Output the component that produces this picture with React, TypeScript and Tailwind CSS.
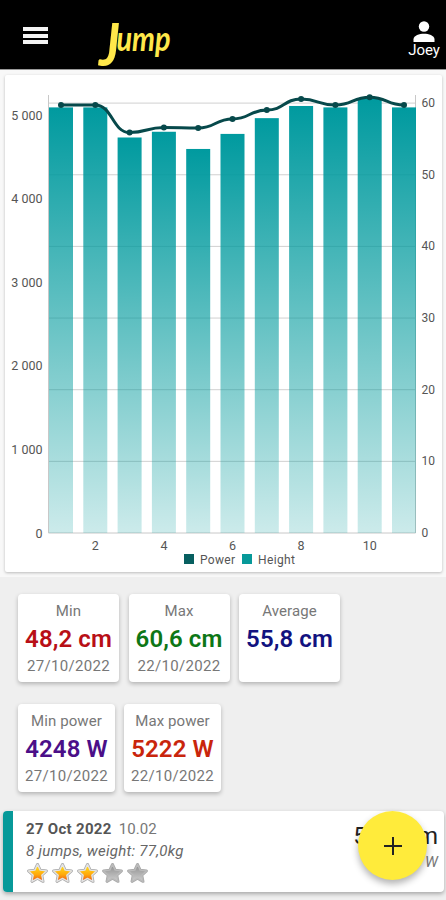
import { clsx } from "clsx";

interface Stat {
  label: string;
  value: string;
  date?: string;
  color: string;
  width: string;
}

const heightStats: Stat[] = [
  { label: "Min", value: "48,2 cm", date: "27/10/2022", color: "text-[#b80f16]", width: "w-[101px]" },
  { label: "Max", value: "60,6 cm", date: "22/10/2022", color: "text-[#0d7716]", width: "w-[101px]" },
  { label: "Average", value: "55,8 cm", color: "text-[#12127f]", width: "w-[101px]" },
];

const powerStats: Stat[] = [
  { label: "Min power", value: "4248 W", date: "27/10/2022", color: "text-[#4b0f88]", width: "w-[97px]" },
  { label: "Max power", value: "5222 W", date: "22/10/2022", color: "text-[#c9250c]", width: "w-[97px]" },
];

// height in cm, shown as bars against the right axis
const heights = [59.4, 59.4, 55.2, 56, 53.6, 55.7, 57.9, 59.6, 59.4, 60.6, 59.4];
// power in W, shown as the curve against the left axis
const powers = [5122, 5122, 4793, 4853, 4847, 4955, 5062, 5194, 5122, 5216, 5122];

const LEFT = 44;
const RIGHT = 410.5;
const BASE = 458;
const STEP = 34.3;

const barX = (i: number) => LEFT + i * STEP;
const heightY = (v: number) => BASE - v * 7.165;
const powerY = (v: number) => BASE - v * 0.08355;

// horizontal bezier: the curve is level at every point
function curvePath() {
  return powers
    .map((p, i) => {
      const x = barX(i) + 12;
      const y = powerY(p);
      if (i === 0) return `M${x} ${y}`;
      const mid = x - STEP / 2;
      return `C${mid} ${powerY(powers[i - 1])} ${mid} ${y} ${x} ${y}`;
    })
    .join(" ");
}

function JumpChart() {
  return (
    <svg width="437" height="497" viewBox="0 0 437 497" className="block text-[12.5px]" fill="#555">
      <defs>
        <linearGradient id="bar" x1="0" y1="0" x2="0" y2="1">
          <stop offset="0" stopColor="#009a9f" />
          <stop offset="1" stopColor="#009a9a" stopOpacity="0.2" />
        </linearGradient>
      </defs>

      {[10, 20, 30, 40, 50, 60].map((v) => (
        <line key={v} x1={LEFT} x2={RIGHT} y1={heightY(v)} y2={heightY(v)} stroke="#d0d0d0" />
      ))}
      <path d={`M${LEFT - 0.5} 20V${BASE}H${RIGHT}V20`} fill="none" stroke="#c8c8c8" />

      {heights.map((h, i) => (
        <rect key={i} x={barX(i)} y={heightY(h)} width="24" height={BASE - heightY(h)} fill="url(#bar)" />
      ))}

      <path d={curvePath()} fill="none" stroke="#07494b" strokeWidth="3" />
      {powers.map((p, i) => (
        <circle key={i} cx={barX(i) + 12} cy={powerY(p)} r="3" fill="#07494b" />
      ))}

      {["0", "1 000", "2 000", "3 000", "4 000", "5 000"].map((t, i) => (
        <text key={t} x="37.5" y={powerY(i * 1000) + 4.5} textAnchor="end">
          {t}
        </text>
      ))}
      {[0, 10, 20, 30, 40, 50, 60].map((v) => (
        <text key={v} x="416.5" y={heightY(v) + 4} fontSize="12">
          {v}
        </text>
      ))}
      {[2, 4, 6, 8, 10].map((v) => (
        <text key={v} x={barX(v - 1) + 12} y="475" textAnchor="middle">
          {v}
        </text>
      ))}

      <rect x="179" y="479" width="10" height="10" fill="#075f60" />
      <text x="195" y="488.5" fontSize="12" textLength="35">Power</text>
      <rect x="237" y="479" width="10" height="10" fill="#079999" />
      <text x="253" y="488.5" fontSize="12" textLength="37">Height</text>
    </svg>
  );
}

function StatCard({ stat }: { stat: Stat }) {
  return (
    <div
      className={clsx(
        "flex h-[88px] flex-col items-center rounded-[4px] bg-white pt-[7px] shadow-[0_2px_4px_rgba(0,0,0,0.25)]",
        stat.width
      )}
    >
      <span className="text-[15px] leading-[20px] tracking-[0.1px] text-[#777]">{stat.label}</span>
      <span
        className={clsx(
          "pt-px text-[24px] font-semibold leading-[34px] tracking-[0.1px] whitespace-nowrap",
          stat.color
        )}
      >
        {stat.value}
      </span>
      {stat.date && (
        <span className="text-[15px] leading-[20px] tracking-[0.3px] text-[#777]">{stat.date}</span>
      )}
    </div>
  );
}

function Star({ filled }: { filled: boolean }) {
  const shape = "M12 2.5l2.8 6 6.6.8-4.9 4.5 1.3 6.5-5.8-3.2-5.8 3.2 1.3-6.5-4.9-4.5 6.6-.8z";
  return (
    <svg width="25" height="22" viewBox="0 0 24 23">
      <defs>
        <linearGradient id="gold" x1="0" y1="0" x2="0" y2="1">
          <stop offset="0.2" stopColor="#ffd21c" />
          <stop offset="0.6" stopColor="#ffa90c" />
          <stop offset="1" stopColor="#e9531b" />
        </linearGradient>
        <linearGradient id="silver" x1="0" y1="0" x2="0" y2="1">
          <stop offset="0" stopColor="#8c8c8c" />
          <stop offset="1" stopColor="#cfcfcf" />
        </linearGradient>
      </defs>
      <path d={shape} fill="#bbb" stroke="#a8a8a8" strokeWidth="3" strokeLinejoin="round" />
      <path
        d={shape}
        fill={filled ? "url(#gold)" : "url(#silver)"}
        stroke={filled ? "#e4e4e4" : "#bbb"}
        strokeWidth="1.4"
        strokeLinejoin="round"
      />
    </svg>
  );
}

function Header() {
  return (
    <header className="flex h-[70px] shrink-0 border-b border-[#999] bg-black pl-[23px]">
      <button aria-label="Menu" className="mt-[27px] flex h-[17px] w-[25px] flex-col justify-between">
        {[0, 1, 2].map((n) => (
          <span key={n} className="h-[4px] w-full bg-[#f4f4f4]" />
        ))}
      </button>
      <svg width="100" height="69" className="ml-[40px] overflow-visible" fill="#ffe84a">
        <text
          transform="translate(11 51) scale(0.85 1)"
          fontFamily="'Lato', sans-serif"
          fontStyle="italic"
          fontWeight="700"
        >
          <tspan fontSize="60" dy="15">
            J
          </tspan>
          <tspan fontSize="34" dy="-15" dx="-4">
            ump
          </tspan>
        </text>
      </svg>
      <div className="ml-auto flex w-[44px] flex-col items-center pt-[21px] text-white">
        <svg width="22" height="21" viewBox="0 0 22 21" fill="currentColor">
          <circle cx="11" cy="5.5" r="5.2" />
          <path d="M0.5 21v-2.5c0-4 6-5.7 10.5-5.7s10.5 1.7 10.5 5.7V21z" />
        </svg>
        <span className="text-[15px] leading-[16px] tracking-[-0.1px]">Joey</span>
      </div>
    </header>
  );
}

export default function App() {
  return (
    <div className="flex h-[900px] w-[446px] flex-col overflow-hidden bg-[#efefef] font-['Roboto',sans-serif]">
      <Header />

      <section className="h-[507px] shrink-0 bg-[#f8f8f8] pt-[5px] pl-[5px]">
        <div className="h-[497px] w-[437px] rounded-[2px] bg-white shadow-[0_1px_3px_rgba(0,0,0,0.25)]">
          <JumpChart />
        </div>
      </section>

      <section className="flex shrink-0 flex-col gap-[22px] pt-[17px] pl-[18px]">
        <div className="flex gap-[9.5px]">
          {heightStats.map((s) => (
            <StatCard key={s.label} stat={s} />
          ))}
        </div>
        <div className="flex gap-[9px]">
          {powerStats.map((s) => (
            <StatCard key={s.label} stat={s} />
          ))}
        </div>
      </section>

      <article className="relative mt-[19px] ml-[3px] flex h-[81px] w-[441px] shrink-0 rounded-[4px] bg-white shadow-[0_2px_4px_rgba(0,0,0,0.3)]">
        <div className="w-[10px] rounded-l-[4px] bg-[#079999]" />
        <div className="flex-1 pt-[8px] pl-[13px] text-[#666]">
          <p className="text-[15px] leading-[21px]">
            <span className="font-bold tracking-[0.3px] text-[#555]">27 Oct 2022</span>
            <span className="ml-[7px] tracking-[0.1px] text-[#777]">10.02</span>
          </p>
          <p className="text-[15px] italic leading-[22px] tracking-[0.27px]">8 jumps, weight: 77,0kg</p>
          <div className="-ml-[1px] flex">
            {[true, true, true, false, false].map((filled, i) => (
              <Star key={i} filled={filled} />
            ))}
          </div>
        </div>
        <div className="flex w-[100px] flex-col items-end pt-[11px] pr-[6px]">
          <span className="text-[24px] leading-[28px] text-[#222] whitespace-nowrap">55,8 cm</span>
          <span className="text-[15px] italic leading-[24px] text-[#777]">4788 W</span>
        </div>
        <button
          aria-label="Add jump"
          className="absolute top-0 left-[355px] flex size-[69px] items-center justify-center rounded-full bg-[#ffeb3b] shadow-[0_4px_7px_rgba(0,0,0,0.3)]"
        >
          <svg width="18" height="18" stroke="#222" strokeWidth="2">
            <path d="M9 0v18M0 9h18" />
          </svg>
        </button>
      </article>
    </div>
  );
}
